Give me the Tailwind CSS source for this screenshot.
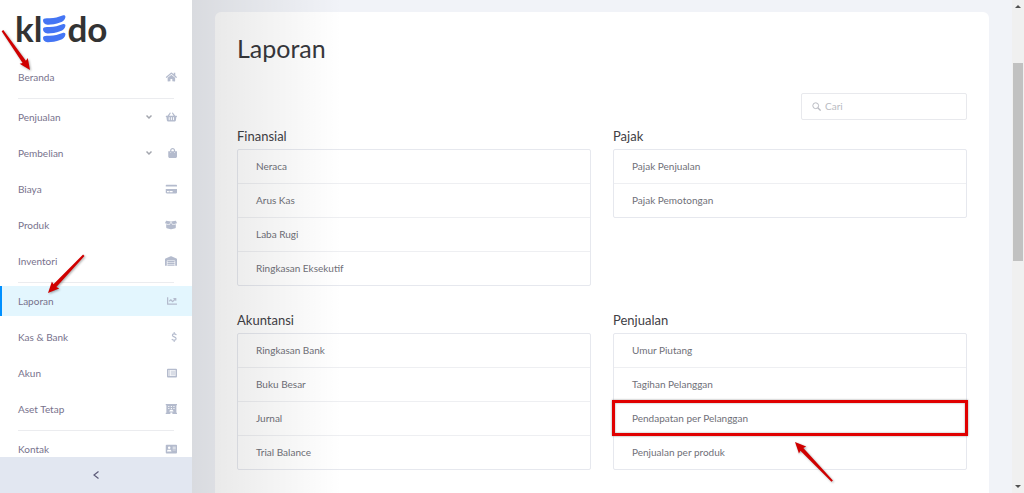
<!DOCTYPE html>
<html lang="id">
<head>
<meta charset="utf-8">
<meta name="viewport" content="width=device-width, initial-scale=1">
<title>Laporan - Kledo</title>
<script src="https://cdn.jsdelivr.net/npm/@tailwindcss/browser@4"></script>
</head>
<body class="relative flex h-screen overflow-hidden bg-[#f1f3f8] font-['Lato',sans-serif] text-[10px] text-[#6f7078]">

<!-- Sidebar -->
<aside class="relative flex w-48 shrink-0 flex-col bg-white">
  <div class="flex min-h-0 flex-1 flex-col overflow-hidden">
    <a href="#" aria-label="kledo" class="flex h-[62px] shrink-0 items-start pt-[7px] pl-[15px] text-[35px] leading-[42px] font-bold text-[#333]">
      <span>kl</span>
      <svg class="mx-px mt-2 h-7 w-[23px] shrink-0" viewBox="0 0 23 28" fill="#4475f4" aria-hidden="true">
        <path d="M0 5.200C0 3.700 1.500 3 5 3.200C11 3.500 15 2 19.500 .4C21.800 -.3 22.600 .8 22.400 2.200C22 5 20 6.400 17 7.500C13 9 8 9.800 4.500 9.700C1.500 9.500 0 7.500 0 5.200Z"/>
        <path d="M0 14C0 12.500 1.500 11.800 5 12C11 12.300 15 10.800 19.500 9.200C21.800 8.500 22.600 9.600 22.400 11C22 13.800 20 15.200 17 16.300C13 17.800 8 18.600 4.500 18.500C1.500 18.300 0 16.300 0 14Z"/>
        <path d="M0 22.800C0 21.300 1.500 20.600 5 20.800C11 21.100 15 19.600 19.500 18C21.800 17.300 22.600 18.400 22.400 19.800C22 22.600 20 24 17 25.100C13 26.600 8 27.400 4.500 27.300C1.500 27.100 0 25.100 0 22.800Z"/>
      </svg>
      <span>do</span>
    </a>
    <nav class="flex flex-col text-[#77728c]">
      <a href="#" class="flex h-[30px] shrink-0 items-center justify-between pr-[15px] pl-[18px]">Beranda
        <svg class="h-[10px] w-3 fill-[#b4bbcd]" viewBox="0 0 576 512" preserveAspectRatio="xMaxYMid"><path d="M280.37 148.26L96 300.11V464a16 16 0 0 0 16 16l112.06-.29a16 16 0 0 0 15.92-16V368a16 16 0 0 1 16-16h64a16 16 0 0 1 16 16v95.64a16 16 0 0 0 16 16.05L464 480a16 16 0 0 0 16-16V300L295.67 148.26a12.19 12.19 0 0 0-15.3 0zM571.6 251.47L488 182.56V44.05a12 12 0 0 0-12-12h-56a12 12 0 0 0-12 12v72.61L318.47 43a48 48 0 0 0-61 0L4.34 251.47a12 12 0 0 0-1.6 16.9l25.5 31A12 12 0 0 0 45.15 301l235.22-193.74a12.19 12.19 0 0 1 15.3 0L530.9 301a12 12 0 0 0 16.9-1.6l25.5-31a12 12 0 0 0-1.7-16.93z"/></svg>
      </a>
      <hr class="mt-[6px] mr-[18px] mb-[3px] ml-[18px] border-[#ebecef]">
      <button type="button" class="flex h-[30px] shrink-0 items-center gap-[13px] pr-[15px] pl-[18px] text-left"><span class="flex-1">Penjualan</span>
        <svg class="h-2 w-[6px]" viewBox="0 0 6 8" fill="none" stroke="#a3a6ae" stroke-width="1.500"><path d="M.5 2.500L3 5L5.500 2.500"/></svg>
        <svg class="h-[10px] w-3 fill-[#b4bbcd]" viewBox="0 0 576 512" preserveAspectRatio="xMaxYMid"><path d="M576 216v16c0 13.255-10.745 24-24 24h-8l-26.113 182.788C514.509 462.435 494.257 480 470.37 480H105.63c-23.887 0-44.139-17.565-47.518-41.212L32 256h-8c-13.255 0-24-10.745-24-24v-16c0-13.255 10.745-24 24-24h67.341l106.78-146.821c10.395-14.292 30.407-17.453 44.701-7.058 14.293 10.395 17.453 30.408 7.058 44.701L170.477 192h235.046L326.12 82.821c-10.395-14.292-7.234-34.306 7.059-44.701 14.291-10.395 34.306-7.235 44.701 7.058L484.659 192H552c13.255 0 24 10.745 24 24zM312 392V280c0-13.255-10.745-24-24-24s-24 10.745-24 24v112c0 13.255 10.745 24 24 24s24-10.745 24-24zm112 0V280c0-13.255-10.745-24-24-24s-24 10.745-24 24v112c0 13.255 10.745 24 24 24s24-10.745 24-24zm-224 0V280c0-13.255-10.745-24-24-24s-24 10.745-24 24v112c0 13.255 10.745 24 24 24s24-10.745 24-24z"/></svg>
      </button>
      <button type="button" class="mt-[6px] flex h-[30px] shrink-0 items-center gap-[13px] pr-[15px] pl-[18px] text-left"><span class="flex-1">Pembelian</span>
        <svg class="h-2 w-[6px]" viewBox="0 0 6 8" fill="none" stroke="#a3a6ae" stroke-width="1.500"><path d="M.5 2.500L3 5L5.500 2.500"/></svg>
        <svg class="h-[10px] w-3 fill-[#b4bbcd]" viewBox="0 0 448 512" preserveAspectRatio="xMaxYMid"><path d="M352 160v-32C352 57.420 294.579 0 224 0 153.420 0 96 57.420 96 128v32H0v272c0 44.183 35.817 80 80 80h288c44.183 0 80-35.817 80-80V160h-96zm-192-32c0-35.290 28.710-64 64-64s64 28.710 64 64v32H160v-32zm160 120c-13.255 0-24-10.745-24-24s10.745-24 24-24 24 10.745 24 24-10.745 24-24 24zm-192 0c-13.255 0-24-10.745-24-24s10.745-24 24-24 24 10.745 24 24-10.745 24-24 24z"/></svg>
      </button>
      <a href="#" class="mt-[6px] flex h-[30px] shrink-0 items-center justify-between pr-[15px] pl-[18px]">Biaya
        <svg class="h-[10px] w-3 fill-[#b4bbcd]" viewBox="0 0 576 512" preserveAspectRatio="xMaxYMid"><path d="M0 432c0 26.500 21.500 48 48 48h480c26.500 0 48-21.500 48-48V256H0v176zm192-68c0-6.600 5.400-12 12-12h136c6.600 0 12 5.400 12 12v40c0 6.600-5.400 12-12 12H204c-6.600 0-12-5.400-12-12v-40zm-128 0c0-6.600 5.400-12 12-12h72c6.600 0 12 5.400 12 12v40c0 6.600-5.400 12-12 12H76c-6.600 0-12-5.400-12-12v-40zM576 80v48H0V80c0-26.500 21.500-48 48-48h480c26.500 0 48 21.500 48 48z"/></svg>
      </a>
      <a href="#" class="mt-[6px] flex h-[30px] shrink-0 items-center justify-between pr-[15px] pl-[18px]">Produk
        <svg class="h-[10px] w-3 fill-[#b4bbcd]" viewBox="0 0 640 512" preserveAspectRatio="xMaxYMid"><path d="M425.700 256c-16.900 0-32.800-9-41.400-23.400L320 126l-64.200 106.600c-8.700 14.500-24.600 23.500-41.500 23.500-4.500 0-9-.6-13.300-1.900L64 215v178c0 14.700 10 27.500 24.200 31l216.200 54.100c10.200 2.500 20.900 2.500 31 0L551.800 424c14.200-3.600 24.200-16.400 24.200-31V215l-137 39.100c-4.300 1.300-8.800 1.900-13.300 1.900zm212.600-112.200L586.800 41c-3.100-6.200-9.800-9.800-16.700-8.900L320 64l91.700 152.100c3.800 6.300 11.400 9.300 18.500 7.300l197.900-56.500c9.900-2.900 14.700-13.900 10.200-23.100zM53.200 41L1.700 143.800c-4.600 9.200.3 20.200 10.100 23l197.900 56.500c7.100 2 14.700-1 18.500-7.300L320 64 69.800 32.100c-6.900-.8-13.500 2.700-16.600 8.900z"/></svg>
      </a>
      <a href="#" class="mt-[6px] flex h-[30px] shrink-0 items-center justify-between pr-[15px] pl-[18px]">Inventori
        <svg class="h-[10px] w-3 fill-[#b4bbcd]" viewBox="0 0 640 512" preserveAspectRatio="xMaxYMid"><path d="M504 352H136.400c-4.400 0-8 3.600-8 8l-.1 48c0 4.400 3.600 8 8 8H504c4.400 0 8-3.600 8-8v-48c0-4.400-3.600-8-8-8zm0 96H136.100c-4.400 0-8 3.600-8 8l-.1 48c0 4.400 3.600 8 8 8h368c4.400 0 8-3.600 8-8v-48c0-4.400-3.600-8-8-8zm0-192H136.600c-4.400 0-8 3.600-8 8l-.1 48c0 4.400 3.600 8 8 8H504c4.400 0 8-3.600 8-8v-48c0-4.400-3.600-8-8-8zm106.500-139L338.400 3.700a48.150 48.150 0 0 0-36.900 0L29.500 117C11.700 124.500 0 141.900 0 161.300V504c0 4.400 3.600 8 8 8h80c4.400 0 8-3.600 8-8V256c0-17.600 14.600-32 32.600-32h382.800c18 0 32.600 14.400 32.600 32v248c0 4.400 3.600 8 8 8h80c4.400 0 8-3.600 8-8V161.300c0-19.400-11.700-36.800-29.500-44.300z"/></svg>
      </a>
      <hr class="mt-[6px] mr-[18px] mb-[3px] ml-[18px] border-[#ebecef]">
      <a href="#" aria-current="page" class="flex h-[30px] shrink-0 items-center justify-between border-l-2 border-[#0090ff] bg-[#e3f6fe] pr-[15px] pl-4">Laporan
        <svg class="h-[10px] w-3 fill-[#b4bbcd]" viewBox="0 0 512 512" preserveAspectRatio="xMaxYMid"><path d="M496 384H64V80c0-8.840-7.160-16-16-16H16C7.160 64 0 71.160 0 80v336c0 17.670 14.330 32 32 32h464c8.840 0 16-7.160 16-16v-32c0-8.840-7.160-16-16-16zM464 96H345.940c-21.380 0-32.090 25.850-16.970 40.970l32.400 32.400L288 242.750l-73.370-73.370c-12.500-12.500-32.760-12.500-45.250 0l-68.690 68.690c-6.250 6.250-6.250 16.380 0 22.630l22.620 22.620c6.250 6.250 16.380 6.250 22.630 0L192 237.250l73.370 73.370c12.500 12.500 32.760 12.500 45.250 0l96-96 32.400 32.400c15.120 15.120 40.970 4.410 40.970-16.970V112c.01-8.840-7.150-16-15.990-16z"/></svg>
      </a>
      <a href="#" class="mt-[6px] flex h-[30px] shrink-0 items-center justify-between pr-[15px] pl-[18px]">Kas &amp; Bank
        <svg class="h-[10px] w-3" viewBox="0 0 288 512" preserveAspectRatio="xMaxYMid" fill="none" stroke="#b4bbcd" stroke-width="60" stroke-linecap="round"><path d="M144 28V90M144 422V484M240 130C215 100 185 92 144 92C88 92 52 120 52 166C52 212 90 232 144 252C202 273 242 294 242 342C242 392 200 420 144 420C100 420 66 408 38 376"/></svg>
      </a>
      <a href="#" class="mt-[6px] flex h-[30px] shrink-0 items-center justify-between pr-[15px] pl-[18px]">Akun
        <svg class="h-[10px] w-3 fill-[#b4bbcd]" viewBox="0 0 512 512" preserveAspectRatio="xMaxYMid" fill-rule="evenodd"><path d="M48 32H464A48 48 0 0 1 512 80V432A48 48 0 0 1 464 480H48A48 48 0 0 1 0 432V80A48 48 0 0 1 48 32ZM76 100V412H436V100ZM100 128H164V184H100ZM196 136H412V176H196ZM100 228H164V284H100ZM196 236H412V276H196ZM100 328H164V384H100ZM196 336H412V376H196Z"/></svg>
      </a>
      <a href="#" class="mt-[6px] flex h-[30px] shrink-0 items-center justify-between pr-[15px] pl-[18px]">Aset Tetap
        <svg class="h-[10px] w-3 fill-[#b4bbcd]" viewBox="0 0 576 512" preserveAspectRatio="xMaxYMid" fill-rule="evenodd"><path d="M0 0H576V64H544V448H576V512H340V430H236V512H0V448H32V64H0ZM128 96V152H184V96ZM260 96V152H316V96ZM392 96V152H448V96ZM128 200V256H184V200ZM260 200V256H316V200ZM392 200V256H448V200ZM180 384H396C388 330 345 300 288 300C231 300 188 330 180 384Z"/></svg>
      </a>
      <hr class="mt-[6px] mr-[18px] mb-[3px] ml-[18px] border-[#ebecef]">
      <a href="#" class="flex h-[30px] shrink-0 items-center justify-between pr-[15px] pl-[18px]">Kontak
        <svg class="h-[10px] w-3 fill-[#b4bbcd]" viewBox="0 0 576 512" preserveAspectRatio="xMaxYMid" fill-rule="evenodd"><path d="M48 32H528A48 48 0 0 1 576 80V432A48 48 0 0 1 528 480H48A48 48 0 0 1 0 432V80A48 48 0 0 1 48 32ZM176 128A64 64 0 1 0 176 256A64 64 0 1 0 176 128ZM64 368C64 318 96 288 130 288H222C256 288 288 318 288 368V384H64ZM352 144V176H512V144ZM352 216V248H512V216ZM352 288V320H512V288Z"/></svg>
      </a>
    </nav>
  </div>
  <button type="button" aria-label="Ciutkan menu" class="flex h-9 shrink-0 items-center justify-center bg-[#e2e7f1]">
    <svg class="h-2 w-[6px]" viewBox="0 0 6 8" fill="none" stroke="#5c5a78" stroke-width="1.200"><path d="M5.500 .5L1 4L5.500 7.500"/></svg>
  </button>
</aside>

<!-- Content -->
<main class="relative min-w-0 flex-1 overflow-hidden pt-3 pr-[23px] pl-[23px]">
  <div class="h-screen rounded-md bg-white px-[22px] pt-5">
    <h1 class="text-[25px] leading-8 font-normal text-[#37383c]">Laporan</h1>
    <div class="mt-[29px] flex justify-end">
      <label class="flex h-[27px] w-[166px] items-center gap-1 rounded-xs border border-[#e8e9ed] pl-[10px]">
        <svg class="h-[9px] w-[9px] shrink-0" viewBox="0 0 9 9" fill="none" stroke="#b9bbc2"><circle cx="3.700" cy="3.700" r="2.900"/><path d="M5.800 5.800L8.600 8.600" stroke-width="1.300"/></svg>
        <input type="search" aria-label="Cari" placeholder="Cari" class="w-full min-w-0 bg-transparent outline-none placeholder:text-[#b9bbc2]">
      </label>
    </div>
    <div class="mt-[6px] grid grid-cols-2 gap-x-[22px] gap-y-6">
      <section>
        <h2 class="mb-[3px] text-[13px] leading-5 text-[#3f4045]">Finansial</h2>
        <ul class="divide-y divide-[#eeeff2] rounded-xs border border-[#e6e8ee]">
          <li><a href="#" class="flex h-[33px] items-center px-[18px]">Neraca</a></li>
          <li><a href="#" class="flex h-[33px] items-center px-[18px]">Arus Kas</a></li>
          <li><a href="#" class="flex h-[33px] items-center px-[18px]">Laba Rugi</a></li>
          <li><a href="#" class="flex h-[33px] items-center px-[18px]">Ringkasan Eksekutif</a></li>
        </ul>
      </section>
      <section>
        <h2 class="mb-[3px] text-[13px] leading-5 text-[#3f4045]">Pajak</h2>
        <ul class="divide-y divide-[#eeeff2] rounded-xs border border-[#e6e8ee]">
          <li><a href="#" class="flex h-[33px] items-center px-[18px]">Pajak Penjualan</a></li>
          <li><a href="#" class="flex h-[33px] items-center px-[18px]">Pajak Pemotongan</a></li>
        </ul>
      </section>
      <section>
        <h2 class="mb-[3px] text-[13px] leading-5 text-[#3f4045]">Akuntansi</h2>
        <ul class="divide-y divide-[#eeeff2] rounded-xs border border-[#e6e8ee]">
          <li><a href="#" class="flex h-[33px] items-center px-[18px]">Ringkasan Bank</a></li>
          <li><a href="#" class="flex h-[33px] items-center px-[18px]">Buku Besar</a></li>
          <li><a href="#" class="flex h-[33px] items-center px-[18px]">Jurnal</a></li>
          <li><a href="#" class="flex h-[33px] items-center px-[18px]">Trial Balance</a></li>
        </ul>
      </section>
      <section>
        <h2 class="mb-[3px] text-[13px] leading-5 text-[#3f4045]">Penjualan</h2>
        <ul class="divide-y divide-[#eeeff2] rounded-xs border border-[#e6e8ee]">
          <li><a href="#" class="flex h-[33px] items-center px-[18px]">Umur Piutang</a></li>
          <li><a href="#" class="flex h-[33px] items-center px-[18px]">Tagihan Pelanggan</a></li>
          <li class="relative"><a href="#" class="flex h-[33px] items-center px-[18px]">Pendapatan per Pelanggan</a>
            <div class="pointer-events-none absolute -inset-x-[2px] -top-[2px] -bottom-px border-3 border-[#e00000] shadow-[0_0_2px_#0006,inset_0_0_2px_#0006]"></div>
            <svg class="pointer-events-none absolute top-[34px] left-[175px] h-[54px] w-[52px] drop-shadow-[1px_1px_1px_#0005]" viewBox="0 0 52 54" fill="#d00000" aria-hidden="true"><path transform="translate(6 6) rotate(46.500)" d="M0 0L11 -5L10 -2L54 -1V1L10 2L11 5Z"/></svg>
          </li>
          <li><a href="#" class="flex h-[33px] items-center px-[18px]">Penjualan per produk</a></li>
        </ul>
      </section>
    </div>
  </div>
  <!-- Soft shade cast by the sidebar -->
  <div class="pointer-events-none absolute inset-y-0 left-0 w-[150px] bg-linear-to-r from-black/10 to-transparent"></div>
</main>

<!-- Scrollbar -->
<div class="flex w-3 shrink-0 flex-col items-center justify-between bg-[#f0f0f0]" aria-hidden="true">
  <svg class="mt-1 h-[5px] w-[6px]" viewBox="0 0 6 5" fill="#505050"><path d="M0 4L3 1L6 4Z"/></svg>
  <div class="mt-[54px] h-[198px] w-[10px] bg-[#c1c1c1]"></div>
  <div class="flex-1"></div>
  <svg class="mb-1 h-[5px] w-[6px]" viewBox="0 0 6 5" fill="#505050"><path d="M0 1L3 4L6 1Z"/></svg>
</div>

<!-- Callout arrows over the menu -->
<svg class="pointer-events-none absolute top-[25px] left-0 h-[54px] w-10 drop-shadow-[1px_1px_1px_#0005]" viewBox="0 0 40 54" fill="#d00000" aria-hidden="true"><path transform="translate(30 45) rotate(235)" d="M0 0L11 -5L10 -2L48 -1V1L10 2L11 5Z"/></svg>
<svg class="pointer-events-none absolute top-[250px] left-10 h-[50px] w-[52px] drop-shadow-[1px_1px_1px_#0005]" viewBox="0 0 52 50" fill="#d00000" aria-hidden="true"><path transform="translate(8 43) rotate(-46.500)" d="M0 0L11 -5L10 -2L52 -1V1L10 2L11 5Z"/></svg>
</body>
</html>
